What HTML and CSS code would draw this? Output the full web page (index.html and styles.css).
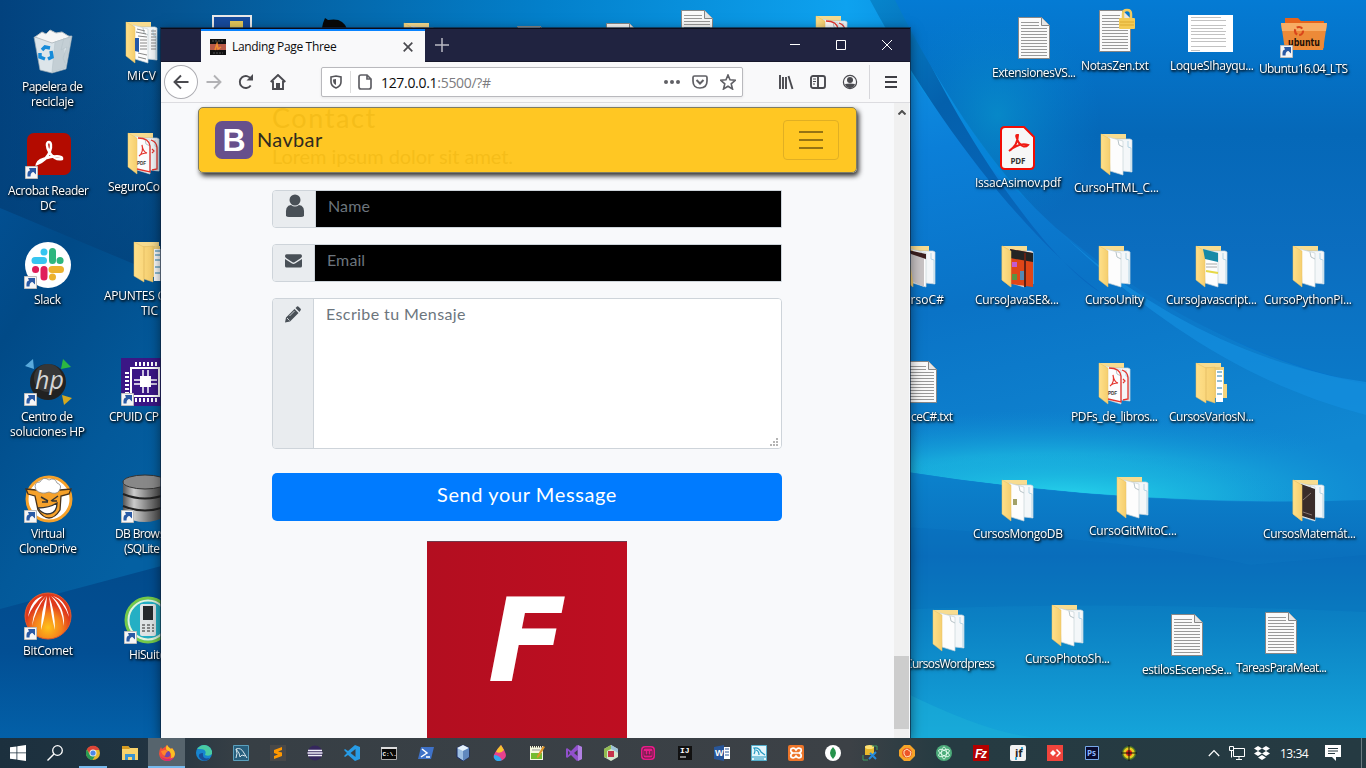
FILE: index.html
```html
<!DOCTYPE html>
<html lang="es">
<head>
<meta charset="utf-8">
<title>Escritorio</title>
<link rel="stylesheet" href="styles.css">
</head>
<body>
<main class="desktop">
<svg class="canvas" width="1366" height="738" viewBox="0 0 1366 738">
<defs>
<linearGradient id="base"><stop offset="0" stop-color="#02427e"/><stop offset=".13" stop-color="#055593"/><stop offset=".4" stop-color="#0380cb"/><stop offset=".62" stop-color="#0ea2ef"/><stop offset=".72" stop-color="#0784d8"/><stop offset=".85" stop-color="#0574cd"/><stop offset="1" stop-color="#0675cc"/></linearGradient>
<linearGradient id="left2" x1="0" y1="0" x2=".6" y2="1"><stop offset="0" stop-color="#024f91"/><stop offset=".25" stop-color="#014a87"/><stop offset=".7" stop-color="#03599a"/><stop offset="1" stop-color="#0460a2"/></linearGradient>
<linearGradient id="left3" x1="0" y1="0" x2="0" y2="1"><stop offset="0" stop-color="#024b8c"/><stop offset=".5" stop-color="#024f94"/><stop offset="1" stop-color="#0360a8"/></linearGradient>
<linearGradient id="shade" x1="0" y1="0" x2="0" y2="1"><stop offset="0" stop-color="#02427c" stop-opacity="0"/><stop offset="1" stop-color="#02427c" stop-opacity=".8"/></linearGradient>
<linearGradient id="ray" x1="0" y1="0" x2=".6" y2="1"><stop offset="0" stop-color="#0785cc"/><stop offset=".4" stop-color="#0460ac"/><stop offset="1" stop-color="#0868bf"/></linearGradient>
<linearGradient id="mid" x1="0" y1="0" x2=".2" y2="1"><stop offset="0" stop-color="#119bea"/><stop offset=".3" stop-color="#0b7fd8"/><stop offset=".6" stop-color="#0a73c6"/><stop offset="1" stop-color="#1088d2"/></linearGradient>
<linearGradient id="right" x1="0" y1="0" x2="0" y2="1"><stop offset="0" stop-color="#047bd4"/><stop offset=".35" stop-color="#0568b8"/><stop offset=".65" stop-color="#0b6dbf"/><stop offset="1" stop-color="#0b79c8"/></linearGradient>
<radialGradient id="teal"><stop offset="0" stop-color="#0894cd"/><stop offset="1" stop-color="#0580d0" stop-opacity="0"/></radialGradient>
<linearGradient id="low" x1="0" y1="0" x2="0" y2="1"><stop offset="0" stop-color="#0b82cd"/><stop offset=".32" stop-color="#0a70bd"/><stop offset=".55" stop-color="#0b80c3"/><stop offset="1" stop-color="#15a5da"/></linearGradient>
<radialGradient id="cyan"><stop offset="0" stop-color="#27d4ec"/><stop offset=".45" stop-color="#1bb8e0" stop-opacity=".85"/><stop offset="1" stop-color="#1090d5" stop-opacity="0"/></radialGradient>
<linearGradient id="fold"><stop offset="0" stop-color="#ffe08a"/><stop offset="1" stop-color="#f5ce6e"/></linearGradient>
<linearGradient id="metal"><stop offset="0" stop-color="#555"/><stop offset=".25" stop-color="#ccc"/><stop offset=".6" stop-color="#777"/><stop offset="1" stop-color="#333"/></linearGradient>
<radialGradient id="comet" cx=".5" cy=".75"><stop offset="0" stop-color="#ffc21a"/><stop offset=".6" stop-color="#f5801c"/><stop offset="1" stop-color="#df3a1c"/></radialGradient>
<clipPath id="cyanclip"><path d="M900 380H1366V500Q1140 508 900 471Z"/></clipPath>
<g id="back"><path d="M8 5h25v34H8z" fill="#eccb76"/><path d="M8 5h25v4H8z" fill="#f7dc90"/></g>
<g id="front"><path d="M8 5l9 5v36l-9-7z" fill="url(#fold)" stroke="#e8c065" stroke-width=".5"/></g>
<g id="folder"><use href="#back"/><path d="M19 10h18l2 1v32l-9-1-11-3z" fill="#f4f7f9" stroke="#cbd9df" stroke-width=".7"/><path d="M15 8l15 4v34l-13-4z" fill="#fdfdfd" stroke="#c5d3d7" stroke-width=".7"/><path d="M25 11l1 5 4 2" fill="none" stroke="#b8c4c8"/><path d="M35 12v6l3 1v23" fill="none" stroke="#b5d5e5"/><use href="#front"/></g>
<g id="pdffolder"><use href="#folder"/><path d="M18 10q11 0 12 8v26l-13-3M31 12q6 2 6 8v21l-5 1" fill="none" stroke="#e4342d" stroke-width="1.300"/><path d="M19 28q5-4 3-11 1 7 5 8-5 0-8 3M32 21l2 2-2 2" fill="none" stroke="#e4342d" stroke-width="1.200"/><text x="17" y="37" class="pdfmini" textLength="9" lengthAdjust="spacingAndGlyphs">PDF</text></g>
<g id="doc"><path d="M8.500 3.500h23l8 8v33h-31z" fill="#fafafa" stroke="#878787"/><path d="M31.500 3.500v8h8" fill="#e6e6e6" stroke="#878787"/><path d="M11 8.500h18M11 11.500h18M11 14.500h26M11 17.500h26M11 20.500h26M11 23.500h26M11 26.500h26M11 29.500h26M11 32.500h26M11 35.500h26M11 38.500h26M11 41.500h26" stroke="#999"/></g>
<g id="short"><path d="M.5 36.500h12v12H.5z" fill="#f6f6f6" stroke="#bdbdbd"/><path d="M2.500 46.500q-.5-6 2.500-6L4 38h7v6.500L8.500 42q-3 0-3 4.500z" fill="#2a5aa5"/></g>
</defs>
<rect width="1366" height="738" fill="url(#base)"/>
<rect y="28" width="180" height="260" fill="url(#shade)"/>
<path d="M0 208L165 277V570L0 610Z" fill="url(#left2)"/>
<path d="M0 609L165 565V738H0Z" fill="url(#left3)"/>
<path d="M870 0C905 75 965 160 1050 215C1130 290 1240 360 1366 384V520H880V20Z" fill="url(#mid)"/>
<path d="M870 0H900C970 160 1060 270 1100 292C1030 240 940 130 870 0Z" fill="url(#ray)"/>
<path d="M895 0H1366V384C1230 354 1130 290 1055 227C990 170 930 70 895 0Z" fill="url(#right)"/>
<path d="M895 0H1100V230H1055C990 170 930 70 895 0Z" fill="url(#teal)" opacity=".7"/>
<path d="M1055 227C1130 300 1245 365 1366 382V415C1250 385 1150 320 1055 227Z" fill="#148fde" opacity=".7"/>
<g clip-path="url(#cyanclip)"><ellipse cx="1040" cy="496" rx="380" ry="85" fill="url(#cyan)"/><ellipse cx="1060" cy="498" rx="240" ry="45" fill="url(#cyan)"/></g>
<path d="M900 471Q1140 509 1366 500V738H900Z" fill="url(#low)"/>
<path d="M900 527Q1140 540 1250 565L1366 555V612Q1100 600 900 610Z" fill="#0763b5" opacity=".2"/>
<path d="M900 690Q1000 740 1050 738H900Z" fill="#1bafd8" opacity=".5"/>
<g>
<!-- Recycle bin -->
<g transform="translate(28 28)"><path d="M6 9l38-1-6 33-14 4-12-3z" fill="#dce5ea" stroke="#9cacb6" stroke-width=".7"/><path d="M7 9l7-5 4 2 4-4 6 3 6-1 8 5-18 6z" fill="#f6f6f6" stroke="#b6bec3"/><path d="M27 14l-3 30 13-4 6-31zM36 10l-3 12 6-3-4 11 2 5" fill="#c4cfd5" stroke="#b6c3ca" stroke-width=".6"/><path d="M14 22l3-3 5 1M23 23l1 6-4 2M17 31l-5-2v-4" fill="none" stroke="#168bd9" stroke-width="3.500"/></g>
<g transform="translate(24 131)"><rect x="3" y="2" width="44" height="42" rx="7" fill="#b30b00"/><path d="M13 33C28 27 29 11 25 11C19 11 27 31 38 28C40 22 14 27 13 33Z" fill="none" stroke="#fff" stroke-width="2.500"/><use href="#short" x="1" y="-1"/></g>
<g transform="translate(24 241)"><circle cx="24" cy="24" r="23" fill="#fff"/><g stroke-width="7" stroke-linecap="round" fill="none"><path d="M11 19.500h8.500M20 11v.1" stroke="#36c5f0"/><path d="M28.500 10.500v9M36 19.500h.1" stroke="#2eb67d"/><path d="M28 28.500h8.500M28.500 36v.1" stroke="#ecb22e"/><path d="M20 28.500V36M11.500 28.500h.1" stroke="#e01e5a"/></g><use href="#short" y="-1"/></g>
<g transform="translate(24 358)"><circle cx="24" cy="24" r="18" fill="#222"/><circle cx="24" cy="20" r="14" fill="#777" opacity=".25"/><path d="M1 8l8-7 1 10z" fill="#5aaadc"/><path d="M39 1l8 8-10 2z" fill="#2cb742"/><path d="M38 37l10 3-8 7z" fill="#d5a920"/><text x="11" y="31" class="hp">hp</text><use href="#short" y="-1"/></g>
<g transform="translate(24 475)"><circle cx="25" cy="24" r="22" fill="#fff" stroke="#f5a12a" stroke-width="3"/><path d="M2 14l10 1h24l11-1-2 5-8 2-1 14q-5 8-11 8t-11-8l-3-14-7-2z" fill="#f5a12a" stroke="#47321b" stroke-width="1.300"/><path d="M12 15q-3-8 4-8 3-6 9-2 6-3 8 3 6 2 2 8-3 4-10 1-8 3-13-2z" fill="#fff" stroke="#888" stroke-width=".8"/><path d="M17 22l7 4M34 21l-7 5M18 27h6M28 26h5" stroke="#333" stroke-width="1.500"/><path d="M14 33q11 0 19-5 0 11-10 11-6-1-9-6z" fill="#fff" stroke="#333" stroke-width="1.300"/><use href="#short" y="-1"/></g>
<g transform="translate(24 592)"><circle cx="24" cy="24" r="23" fill="url(#comet)" stroke="#e95a2a"/><path d="M22 4Q9 16 8 34Q12 17 22 4M23 4Q17 18 17 38Q22 22 23 4M25 4Q27 23 31 38Q31 19 25 4M27 4Q38 16 40 34Q41 14 27 4M19 4Q7 7 4 25Q9 12 19 4M29 4Q42 8 45 25Q40 10 29 4" fill="#fff"/><use href="#short" y="-1"/></g>
<use href="#folder" x="118" y="17"/><path d="M135 38h4v14l-4-1z" fill="#2458a8"/><path d="M137 29l8 2M136 32l10 2M138 36l9 1M140 40h7M140 43h7M140 46h7M140 49h7M138 53l9 2M138 57l8 2M151 31h5M151 34h5M151 37h5M151 40h5M151 43h5M151 46h5M151 49h5" stroke="#888"/>
<use href="#pdffolder" x="120" y="128"/>
<g id="nest" transform="translate(126 237)"><use href="#back"/><path d="M29 9h5l1 17h3v14H26z" fill="#f4d47e"/><path d="M28 12h7v32h-7z" fill="#fff"/><path d="M29 14h5M29 18h5M29 23h5M29 30h5M29 36h5" stroke="#257fae"/><path d="M8 5l10 5v35l-10-6zM18 10l9-1v36l-9-3z" fill="url(#fold)" stroke="#e4bd64" stroke-width=".5"/></g>
<g transform="translate(121 358)"><path d="M0 0h48v48H0z" fill="#3b1785"/><path d="M10 10h28v28H10z" fill="none" stroke="#fff" stroke-width="2"/><rect x="19" y="18" width="11" height="11" fill="#fff"/><path d="M14 6h23M14 42h23" stroke="#fff" stroke-width="4" stroke-dasharray="2 2"/><path d="M6 14v23" stroke="#fff" stroke-width="4" stroke-dasharray="2 2"/><path d="M22 18v-6M27 18v-6M22 29v6M27 29v6M19 22h-6M19 26h-6M30 22h6M30 26h6" stroke="#fff" stroke-width="1.500"/><use href="#short" y="-1"/></g>
<g transform="translate(121 475)"><path d="M2 7v34q21 12 44 0V7z" fill="url(#metal)"/><ellipse cx="24" cy="7" rx="22" ry="7" fill="#888" stroke="#333"/><path d="M2 19q22 9 44 0M2 31q22 9 44 0" fill="none" stroke="#222" stroke-width="2"/><use href="#short" y="-1"/></g>
<g transform="translate(124 596)"><circle cx="24" cy="24" r="22" fill="#24afc4" stroke="#74c949" stroke-width="3"/><circle cx="24" cy="24" r="19.500" fill="none" stroke="#e2f5db" stroke-width="2"/><rect x="16" y="8" width="16" height="32" rx="2" fill="#dfe4e5"/><rect x="19" y="10" width="10" height="14" fill="#252a2c"/><path d="M18 29h3M23 29h3M28 29h2M18 32h3M23 32h3M28 32h2M18 35h3M23 35h3M28 35h2" stroke="#666" stroke-width="1.500"/><use href="#short" y="-1"/></g>
<!-- Icons peeking over the window -->
<path d="M213 16h38v14h-38z" fill="#174b9e" stroke="#e8e8e8" stroke-width="2"/><path d="M230 21h13v8h-13z" fill="#e4c75a"/><path d="M322 28q1-6 3-10l3 2q15-3 19 9z" fill="#080808"/>
<use href="#folder" x="396" y="18"/><use href="#doc" x="509" y="23"/><use href="#doc" x="598" y="20"/><use href="#doc" x="673" y="7"/><use href="#pdffolder" x="808" y="11"/>
<!-- Right side -->
<use href="#doc" x="1010" y="14"/><use href="#doc" x="1091" y="7"/><path d="M1123 19v-5q0-4 4-4t4 4v5" fill="none" stroke="#efcb60" stroke-width="2.500"/><rect x="1119" y="18" width="16" height="11" rx="1" fill="#f4cb55"/><path d="M1120 22h14M1120 25h14" stroke="#dda92f"/>
<path d="M1188 15h45v37h-45z" fill="#fff"/><path d="M1191 17.500h30M1191 20.500h35M1191 25.500h35M1191 28.500h32M1191 31.500h35M1191 34.500h34M1191 38.500h35M1191 41.500h35M1191 46.500h35M1191 50.500h9" stroke="#c2c2c2"/>
<g transform="translate(1280 9)"><path d="M5 9h13l3 3h23v27H5z" fill="#e6641c"/><path d="M1 14h46l-4 27H5z" fill="#ed8a38"/><path d="M1 14h46l-1 8H2z" fill="#f8ad64"/><circle cx="19" cy="22" r="4" fill="none" stroke="#d9451b" stroke-width="2.200" stroke-dasharray="6 2"/><text x="8" y="37" class="ubu" textLength="32" lengthAdjust="spacingAndGlyphs">ubuntu</text><use href="#short"/></g>
<path d="M1005 127h19l10 10v28q0 4-4 4h-25q-4 0-4-4v-34q0-4 4-4z" fill="#f7f7f7" stroke="#f20c04" stroke-width="2"/><path d="M1009 151Q1018 145 1018 135Q1014 134 1019 143Q1024 149 1028 145Q1020 142 1009 151" fill="none" stroke="#ef1a13" stroke-width="2"/><text x="1010.500" y="164" class="pdf" textLength="15">PDF</text>
<use href="#folder" x="1093" y="129"/>
<use href="#folder" x="896" y="241"/><path d="M908 250l16 7v30l-11-5z" fill="#c9c4c5"/><path d="M908 250l18 4v5l-15-5z" fill="#3c2020"/>
<use href="#folder" x="994" y="241"/><path d="M1010 249l23 4v34l-22-3z" fill="#df4618"/><path d="M1010 249l23 4v9l-23-4z" fill="#242424"/><path d="M1012 262h5v5h-5z" fill="#c35bd1"/><path d="M1012 274h5v6h-5z" fill="#5b9241"/><path d="M1020 271h4v9h-4z" fill="#5388b6"/><path d="M1025 253v34" stroke="#642115" stroke-width="2"/><use href="#front" x="994" y="241"/>
<use href="#folder" x="1091" y="241"/><use href="#folder" x="1188" y="241"/><path d="M1203 249l15 4v9l-13-3z" fill="#168aa7"/><path d="M1206 264h11M1206 267h11" stroke="#aaa"/><path d="M1206 271l12 2" stroke="#e6d847" stroke-width="2"/><use href="#folder" x="1285" y="241"/>
<use href="#doc" x="897" y="358"/><use href="#pdffolder" x="1091" y="358"/><g transform="translate(1188 358)"><use href="#back"/><path d="M32 9h4v17h3v14H27z" fill="#f4d47e"/><path d="M28 12h7v32h-7z" fill="#fff"/><path d="M29 14h5M29 18h5M29 23h5M29 30h5M29 36h5" stroke="#257fae"/><path d="M8 5l10 5v35l-10-6zM18 10l9-1v36l-9-3z" fill="url(#fold)" stroke="#e4bd64" stroke-width=".5"/></g>
<use href="#folder" x="994" y="475"/><path d="M1013 499h4v6h-4z" fill="#a2a168"/><use href="#folder" x="1109" y="472"/><use href="#folder" x="1285" y="475"/><path d="M1301 484l14 5v31l-13-4z" fill="#392c2a"/><path d="M1303 500l8-7M1303 512l9 3" stroke="#83736e"/><use href="#front" x="1285" y="475"/>
<use href="#folder" x="925" y="605"/><use href="#folder" x="1044" y="600"/><use href="#doc" x="1163" y="611"/><use href="#doc" x="1257" y="609"/>
</g>
<g class="labels">
<text x="22" y="91" textLength="61">Papelera de</text><text x="31" y="106" textLength="43">reciclaje</text>
<text x="8" y="195" textLength="81">Acrobat Reader</text><text x="40" y="210" textLength="16">DC</text>
<text x="34" y="304" textLength="27">Slack</text>
<text x="21" y="421" textLength="52">Centro de</text><text x="10" y="436" textLength="75">soluciones HP</text>
<text x="31" y="538" textLength="34">Virtual</text><text x="19" y="553" textLength="58">CloneDrive</text>
<text x="23" y="655" textLength="50">BitComet</text>
<text x="127" y="80" textLength="29">MiCV</text><text x="108" y="191" textLength="52">SeguroCo</text>
<text x="104" y="300" textLength="61">APUNTES C</text><text x="141" y="315" textLength="17">TIC</text>
<text x="109" y="421" textLength="50">CPUID CP</text><text x="115" y="538" textLength="56">DB Browse</text><text x="124" y="553" textLength="36">(SQLite</text><text x="129" y="659" textLength="37">HiSuite</text>
<text x="992" y="77" textLength="84">ExtensionesVS...</text><text x="1081" y="70" textLength="68">NotasZen.txt</text><text x="1170" y="70" textLength="84">LoqueSIhayqu...</text><text x="1259" y="73" textLength="89">Ubuntu16.04_LTS</text>
<text x="975" y="187" textLength="86">IssacAsimov.pdf</text><text x="1074" y="192" textLength="85">CursoHTML_C...</text>
<text x="903" y="304" textLength="41">ursoC#</text><text x="975" y="304" textLength="84">CursoJavaSE&amp;...</text><text x="1085" y="304" textLength="59">CursoUnity</text><text x="1166" y="304" textLength="91">CursoJavascript...</text><text x="1264" y="304" textLength="88">CursoPythonPi...</text>
<text x="911" y="421" textLength="42">ceC#.txt</text><text x="1071" y="421" textLength="87">PDFs_de_libros...</text><text x="1169" y="421" textLength="85">CursosVariosN...</text>
<text x="973" y="538" textLength="90">CursosMongoDB</text><text x="1089" y="535" textLength="88">CursoGitMitoC...</text><text x="1263" y="538" textLength="93">CursosMatemát...</text>
<text x="905" y="668" textLength="90">CursosWordpress</text><text x="1025" y="663" textLength="85">CursoPhotoSh...</text><text x="1142" y="674" textLength="90">estilosEsceneSe...</text><text x="1236" y="672" textLength="91">TareasParaMeat...</text>
</g>
</svg>

<section class="window">
<header class="titlebar">
<div class="tab"><svg width="16" height="16"><path d="M0 0h16v16H0z" fill="#111"/><path d="M0 5h16v6H0z" fill="#b85a48"/><path d="M2 2h12M3 14h10" stroke="#555" stroke-dasharray="2 1"/><path d="M5 11l2-6 1 5 3-2" stroke="#f08b31" fill="none" stroke-width="1.500"/></svg><span class="tabname">Landing Page Three</span><svg class="tabclose" width="10" height="10"><path d="M.7.7l8.600 8.600M9.300.7L.7 9.300" stroke="#4a4a4f" stroke-width="1.700"/></svg></div>
<svg class="plus" width="14" height="14"><path d="M7 0v14M0 7h14" stroke="#b9bac3" stroke-width="1.500"/></svg>
<div class="winbtns"><svg width="10" height="10"><path d="M0 4.500h10" stroke="#fff"/></svg><svg width="10" height="10"><path d="M.5.5h9v9h-9z" fill="none" stroke="#fff"/></svg><svg width="10" height="10"><path d="M0 0l10 10M10 0L0 10" stroke="#fff"/></svg></div>
</header>
<div class="toolbar">
<span class="back"><svg width="16" height="16"><path d="M15.500 8H1.500M8 1.500L1.500 8 8 14.500" class="ln"/></svg></span>
<svg class="fwd" width="16" height="16"><path d="M.5 8h14M8 1.500L14.500 8 8 14.500" class="ln"/></svg>
<svg class="reload" width="16" height="16"><path d="M12.700 11.500A6 6 0 1 1 13 5" class="ln"/><path d="M15 0v6.500H8.500z" fill="#4a4a4f"/></svg>
<svg class="home" width="16" height="16"><path d="M.7 8L8 1l7.300 7M3 7v8h10V7" class="ln"/><path d="M6 9h4v6H6z" fill="#4a4a4f"/></svg>
<div class="url">
<svg width="12" height="14"><path d="M1 2l5-1 5 1v5q0 4-5 6-5-2-5-6z" fill="none" stroke="#55555a" stroke-width="1.600"/><path d="M6 4v6q-3-1-3-5V4.500z" fill="#55555a"/></svg><i class="sep"></i>
<svg width="14" height="16"><path d="M3 1h6l4 4v8q0 2-2 2H3q-2 0-2-2V3q0-2 2-2zM9 1v4h4" fill="none" stroke="#606065" stroke-width="1.700"/></svg>
<span class="addr">127.0.0.1<em>:5500/?#</em></span>
<svg width="16" height="16"><g fill="#606065"><circle cx="2" cy="8" r="2"/><circle cx="8" cy="8" r="2"/><circle cx="14" cy="8" r="2"/></g></svg>
<svg class="pocket" width="16" height="16"><path d="M2.500 2h11q1.500 0 1.500 1.500V7q0 7-7 7T1 7V3.500Q1 2 2.500 2z" fill="none" stroke="#606065" stroke-width="1.700"/><path d="M4.500 6L8 9.500 11.500 6" fill="none" stroke="#606065" stroke-width="2"/></svg>
<svg width="16" height="16"><path d="M8 1l2 4.800 5.200.5-4 3.500L12.500 15 8 12.200 3.500 15l1.300-5.200-4-3.500L6 5.800z" fill="none" stroke="#606065" stroke-width="1.600"/></svg>
</div>
<svg class="lib" width="16" height="16"><path d="M2 1v14M5 3v12M8 3v12" class="ln"/><path d="M10.500 2l4 13" class="ln"/></svg>
<svg class="side" width="16" height="14"><rect x="1" y="1" width="14" height="12" rx="2" class="ln"/><path d="M8 1v12" class="ln"/><path d="M3 4h3M3 6.500h3M3 9h2" stroke="#4a4a4f"/></svg>
<svg class="user" width="16" height="16"><circle cx="8" cy="8" r="6.600" fill="none" stroke="#4a4a4f" stroke-width="1.200"/><circle cx="8" cy="6" r="3" fill="#4a4a4f"/><path d="M3 10q5-1 10 0-1 4-5 4t-5-4z" fill="#4a4a4f"/></svg>
<i class="divider"></i>
<svg class="menu" width="12" height="12"><path d="M0 1h12M0 6h12M0 11h12" stroke="#3f3f44" stroke-width="2"/></svg>
</div>
<div class="viewport">
<div class="page">
<div class="form">
<h2>Contact</h2><p>Lorem ipsum dolor sit amet.</p>
<div class="group"><span class="addon name"><svg width="20" height="24" viewBox="0 0 20 24"><path d="M1 22q-1-11 5-11 4 3 8 0 6 0 5 11-1 1-3 1H4q-2 0-3-1z"/><circle cx="10" cy="6" r="5.500"/></svg></span><span class="input">Name</span></div>
<div class="group"><span class="addon mail"><svg width="17" height="14" viewBox="0 0 17 14"><path d="M0 2q0-1.800 1.600-1.800h13.800Q17 .2 17 2q0 1-1 2L9.500 8.200q-1 .6-2 0L1 4Q0 3 0 2zM0 5l7 4.600q1.500.8 3 0L17 5v7q0 1.600-1.600 1.600H1.600Q0 13.600 0 12z"/></svg></span><span class="input">Email</span></div>
<div class="group message"><span class="addon pen"><svg width="16" height="17" viewBox="0 0 16 17"><path d="M0 16.500l1-5L9.500 3l4 4L5 15.500zM10.500 2L12 .6q.8-.6 1.600.2l2 2q.7.8 0 1.500L14.500 6z"/><path d="M2 12l2.500 2.500M4.500 10L9.500 5" stroke="#e9ecef" stroke-width=".8"/></svg></span><span class="input">Escribe tu Mensaje</span><svg class="grip" width="8" height="8"><path d="M6 0h2v2H6zM3 3h2v2H3zM6 3h2v2H6zM0 6h2v2H0zM3 6h2v2H3zM6 6h2v2H6z" fill="#b4b4b4"/></svg></div>
<div class="send"><span>Send your Message</span></div>
<div class="logo">F</div>
</div>
<nav class="navbar"><span class="bs">B</span><span class="brand">Navbar</span><span class="toggler"><svg width="24" height="18"><path d="M0 1h24M0 9h24M0 17h24" stroke="#957313" stroke-width="2"/></svg></span></nav>
</div>
<div class="scroll"><svg width="8" height="5"><path d="M.5 4.500L4 1l3.500 3.500" fill="none" stroke="#505050" stroke-width="2"/></svg><i class="thumb"></i></div>
</div>
</section>
</main>

<footer class="taskbar">
<span class="t start"><svg width="16" height="16"><path d="M0 2.300L6.500 1.400V7.500H0zM7.300 1.300L16 0v7.500H7.300zM0 8.300h6.500v6.200L0 13.700zM7.300 8.300H16V16l-8.700-1.300z" fill="#fff"/></svg></span>
<span class="t find"><svg width="16" height="16"><circle cx="10.500" cy="5.500" r="4.800" fill="none" stroke="#fff" stroke-width="1.300"/><path d="M7 9L.5 15.500" stroke="#fff" stroke-width="1.400"/></svg></span>
<span class="t run"><svg width="16" height="16"><circle cx="8" cy="8" r="7" fill="#e5b82e"/><path d="M1.900 4.500A7 7 0 0 1 14.500 5H8L5 9z" fill="#dc4437"/><path d="M1.900 4.500A7 7 0 0 0 7.500 15L10.500 10H5z" fill="#279b55"/><circle cx="8" cy="8" r="3.500" fill="#eee"/><circle cx="8" cy="8" r="2.600" fill="#4b87e8"/></svg></span>
<span class="t"><svg width="16" height="16"><path d="M0 1h6l2 2h8v12H0z" fill="#f8d36c"/><path d="M0 1h6l2 3H0z" fill="#d49b21"/><path d="M3 15V9h10v6h-3v-3H6v3z" fill="#3a93d1"/></svg></span>
<span class="t active"><svg width="16" height="16"><path d="M8 0q1 2 4 4l1-1q3 3 3 6-1 7-8 7T0 9q0-4 2-7l1 2 3-2z" fill="#f2503c"/><path d="M8 0q1 2 4 4l1-1q3 3 3 6-1 5-5 6 2-3 1-6-1-3-4-3-2-3 0-6z" fill="#fbc023"/><circle cx="8" cy="9" r="3.200" fill="#7146ad"/><path d="M2 6l4-1 3 1-2 2-1 3q-3-1-4-5" fill="#ff852b"/><path d="M1 11q3 5 8 5 4 0 6-4-3 2-7 2t-7-3" fill="#d82a77"/></svg></span>
<span class="t"><svg width="16" height="16"><circle cx="8" cy="8" r="8" fill="#1785cf"/><path d="M1 4Q6-2 12 1q5 3 4 8-3 3-7 1 3-7-8-6z" fill="#49cba2"/><path d="M7 8q-1 7 7 5-6 6-11-1-1-4 4-4z" fill="#194d98"/></svg></span>
<span class="t"><svg width="16" height="16"><path d="M.5.5h15v15H.5z" fill="#285f7d" stroke="#5ba0bd"/><path d="M3 13Q5 8 3 4q5-2 8 4l3 5M3 4q4 4 4 8l2-2 3 1" fill="none" stroke="#d9e7ed"/></svg></span>
<span class="t"><svg width="16" height="16"><path d="M0 0h16v16H0z" fill="#484848"/><path d="M4 5l8-3v3L8 6.500l4 1V11l-8 3v-3l4-1.500L4 8z" fill="#ff9800"/></svg></span>
<span class="t"><svg width="16" height="16"><circle cx="8" cy="8" r="7.500" fill="#35275d"/><path d="M1 5.500h14M.5 8h15M1 10.500h14" stroke="#f1effa" stroke-width="1.300"/></svg></span>
<span class="t"><svg width="16" height="16"><path d="M11 0l5 2v12l-5 2-7-6-3 2-1-1 3-3-3-3 1-1 3 2zM11.500 4L6.500 8l5 4z" fill="#279ce6" fill-rule="evenodd"/></svg></span>
<span class="t"><svg width="16" height="16"><path d="M.5 2.500h15v12H.5z" fill="#080808" stroke="#aaa"/><path d="M0 2h16v2H0z" fill="#ddd"/><text x="1.500" y="11" class="tiny">C:\.</text></svg></span>
<span class="t"><svg width="16" height="16"><path d="M3 2h13l-3 12H0z" fill="#3f72c8"/><path d="M4 4l5 4-6 4M8 12h4" fill="none" stroke="#fff" stroke-width="1.500"/></svg></span>
<span class="t"><svg width="16" height="16"><path d="M2 3l6-3 6 3v9l-6 4-6-4z" fill="#9dbfe2" stroke="#182b65"/><path d="M2 3l6 3 6-3-6-3z" fill="#e6f3fd"/><path d="M8 6l6-3v9l-6 4z" fill="#6088be"/></svg></span>
<span class="t"><svg width="16" height="16"><path d="M9 0Q0 10 2 13q6 6 11 0Q16 10 9 0z" fill="#e9418d"/><path d="M9 0Q5 4 4 7q5 2 8-2z" fill="#f7c52f"/><path d="M2 10q5 0 8 5-6 3-8-2z" fill="#30a9ef"/></svg></span>
<span class="t"><svg width="16" height="16"><path d="M1 1h13v14H1z" fill="#f4f7df"/><path d="M2 1.500h11" stroke="#333" stroke-dasharray="1 1" stroke-width="2"/><path d="M2 8h11v6H2z" fill="#75bb31"/><path d="M3 5h8" stroke="#999"/><path d="M8 11l6-10 2 1-6 10-2 1z" fill="#dc942b"/></svg></span>
<span class="t"><svg width="16" height="16"><path d="M11 0l5 2v12l-5 2-6-6-4 3-1-1V4l1-1 4 3zM2 5.500v5L4 8zM11.500 5L8 8l3.500 3z" fill="#9150cc" fill-rule="evenodd"/><path d="M12 0l4 2v12l-4 2z" fill="#b180e3"/></svg></span>
<span class="t"><svg width="16" height="16"><path d="M1 4l7-4 7 4v8l-7 4-7-4z" fill="#d5e8ce"/><path d="M1 4l7-4v4L4 6v7l-3-1z" fill="#93bb52"/><path d="M8 0l7 4v4l-3-2-4-2z" fill="#9dc2d8"/><path d="M5 6h6v6H5z" fill="#c5334a"/></svg></span>
<span class="t"><svg width="16" height="16"><rect x="1" y="1" width="14" height="14" rx="4" fill="#e91b89"/><rect x="3" y="3" width="10" height="10" rx="2" fill="none" stroke="#57213e"/><path d="M5 6v4h3V6v4h3V6" fill="none" stroke="#57213e" stroke-width="1.200"/></svg></span>
<span class="t"><svg width="16" height="16"><path d="M1 1h14v14H1z" fill="#111"/><text x="3" y="8" class="ij">IJ</text><path d="M3 12h6" stroke="#fff"/></svg></span>
<span class="t"><svg width="16" height="16"><path d="M7 2h9v12H7z" fill="#fff"/><path d="M0 2l10-2v16L0 14z" fill="#285699"/><text x="1" y="11" class="word">W</text><path d="M11 4h4M11 7h4M11 10h4" stroke="#285699"/></svg></span>
<span class="t"><svg width="16" height="16"><path d="M.5.5h15v15H.5z" fill="#e3f5fb" stroke="#53adca"/><path d="M3 9Q5 5 3 3q5-1 7 4l4 3M5 5q3 1 3 5M1 12h14M3 14h10" fill="none" stroke="#2599c1" stroke-width="1.200"/></svg></span>
<span class="t"><svg width="16" height="16"><rect width="16" height="16" rx="2" fill="#ed752a"/><path d="M5 8Q2 7 3 4q3-2 5 1 2-3 5-1 1 3-2 4 3 1 2 4-3 2-5-1-2 3-5 1-1-3 2-4h6" fill="none" stroke="#fff" stroke-width="1.700"/></svg></span>
<span class="t"><svg width="16" height="16"><circle cx="8" cy="8" r="8" fill="#fff"/><path d="M8 2q6 6 0 12-6-6 0-12z" fill="#25934c"/></svg></span>
<span class="t"><svg width="16" height="16"><path d="M3 1h9v9H3z" fill="#e6b72c"/><ellipse cx="7.500" cy="2" rx="4.500" ry="2" fill="#ffe275"/><path d="M1 10v5h5M10 1h5v4" fill="none" stroke="#419f62"/><path d="M7 14l7-7M8 8l6 6" stroke="#2589da" stroke-width="2"/></svg></span>
<span class="t"><svg width="16" height="16"><path d="M5 0h6l5 5v6l-5 5H5l-5-5V5z" fill="#f5a428"/><circle cx="8" cy="8" r="5" fill="#ed5528"/><path d="M5 6l3-2 4 3-1 4-4 1-2-3z" fill="none" stroke="#ffe5ba"/></svg></span>
<span class="t"><svg width="16" height="16"><circle cx="8" cy="8" r="8" fill="#4dac7b"/><g fill="none" stroke="#e8fff2" stroke-width=".8"><ellipse cx="8" cy="8" rx="2.500" ry="6"/><ellipse cx="8" cy="8" rx="2.500" ry="6" transform="rotate(60 8 8)"/><ellipse cx="8" cy="8" rx="2.500" ry="6" transform="rotate(-60 8 8)"/></g></svg></span>
<span class="t"><svg width="16" height="16"><path d="M0 0h16v16H0z" fill="#b30000"/><text x="2" y="13" class="fz" textLength="12">Fz</text></svg></span>
<span class="t"><svg width="16" height="16"><rect width="16" height="16" rx="2" fill="#f2f2f2"/><text x="5" y="12" class="iff">if</text><path d="M5 12h2v3H5zM11 2h2v2h-2z" fill="#43afd8"/></svg></span>
<span class="t"><svg width="16" height="16"><path d="M0 0h16v16H0z" fill="#f0443c"/><path d="M6 5l3 3-3 3-3-3zM9 5l1-1 4 4-4 4-1-1 3-3z" fill="#fff"/></svg></span>
<span class="t"><svg width="14" height="14"><path d="M.5.5h13v13H.5z" fill="#090c30" stroke="#76a8e9"/><text x="2" y="10" class="ps">Ps</text></svg></span>
<span class="t"><svg width="16" height="16"><circle cx="8" cy="8" r="7" fill="#557f22"/><circle cx="8" cy="8" r="5.700" fill="#e9cb20"/><circle cx="8" cy="8" r="3" fill="#e11e16"/><path d="M8 0v16M0 8h16" stroke="#111"/></svg></span>
<div class="tray"><svg width="12" height="8"><path d="M.8 7L6 1.500 11.200 7" fill="none" stroke="#fff" stroke-width="1.200"/></svg><svg width="16" height="14"><path d="M4.500 2.500h11v8h-11zM10 10.500v3M7 13.500h6M.5.5h4v4h-4zM2.500 4.500v7" fill="none" stroke="#fff"/></svg><svg width="16" height="14"><path d="M4 0l4 2.500L4 5 0 2.500zM12 0l4 2.500L12 5 8 2.500zM4 5l4 2.500L4 10 0 7.500zM12 5l4 2.500-4 2.500-4-2.500zM8 9l4 2.500L8 14l-4-2.500z" fill="#fff"/></svg><span class="clock">13:34</span><svg width="16" height="16"><path d="M0 0h16v12h-5v4l-4-4H0z" fill="#fff"/><path d="M3 3.500h10M3 6h10M3 8.500h7" stroke="#263941"/></svg></div>
</footer>
</body>
</html>
```
FILE: styles.css
```css
* { box-sizing: border-box; }
body { margin: 0; width: 1366px; height: 768px; overflow: hidden; font-family: "Open Sans", "Noto Sans", sans-serif; font-size: 12px; }
svg { display: block; flex: none; }
.desktop { position: relative; height: 738px; overflow: hidden; }
.labels { fill: #fff; font-size: 12px; filter: drop-shadow(1px 1px 1px rgba(0,0,0,.95)) drop-shadow(0 1px 1px rgba(0,0,0,.5)); }
.pdfmini { font: bold 6px "Liberation Sans", sans-serif; fill: #333; }
.pdf { font: bold 8px "Open Sans", sans-serif; fill: #333; }
.hp { font: italic 25px "Open Sans", sans-serif; fill: #d5d5d5; }
.ubu { font: bold 10px "DejaVu Sans", sans-serif; fill: #241006; }

.window { position: absolute; left: 161px; top: 28px; width: 749px; height: 710px; display: flex; flex-direction: column; background: #f7f9fc; box-shadow: 0 0 0 1px rgba(15,35,60,.65), 0 3px 12px rgba(0,0,0,.55); }
.titlebar { height: 34px; background: #202340; border-top: 1px solid #0b0c19; border-bottom: 1px solid #16172b; padding-left: 40px; display: flex; align-items: center; }
.tab { align-self: flex-start; width: 224px; height: 33px; background: #f9f9fa; border-top: 2px solid #0a84ff; display: flex; align-items: center; padding: 0 12px 0 9px; color: #0c0c0d; }
.tabname { margin-left: 6px; flex: 1; letter-spacing: -.33px; white-space: nowrap; }
.plus { margin-left: 10px; }
.winbtns { margin-left: auto; display: flex; gap: 36px; padding-right: 18px; }
.toolbar { height: 41px; flex: none; background: #f9f9fa; border-bottom: 1px solid #dcdce0; display: flex; align-items: center; padding: 0 13px 0 3px; }
.ln { fill: none; stroke: #4a4a4f; stroke-width: 1.9; }
.back { width: 34px; height: 34px; border: 1px solid #adadb2; border-radius: 50%; background: #fff; display: grid; place-items: center; }
.fwd { margin-left: 8px; opacity: .4; }
.reload { margin-left: 16px; }
.home { margin-left: 16px; }
.url { margin-left: 35px; width: 423px; height: 30px; border: 1px solid #b9b9bd; border-radius: 2px; background: #fff; display: flex; align-items: center; padding: 0 6px 0 8px; box-shadow: 0 1px 3px rgba(0,0,0,.08); }
.sep { width: 1px; height: 22px; background: #ddd; margin: 0 7px 0 8px; }
.addr { flex: 1; margin-left: 9px; font-size: 14px; letter-spacing: -.3px; color: #0c0c0d; }
.addr em { font-style: normal; color: #7c7c80; }
.pocket { margin: 0 12px; }
.lib { margin-left: 35px; }
.side { margin-left: 16px; }
.user { margin-left: 16px; }
.divider { width: 1px; height: 34px; background: #d7d7db; margin: 0 15px 0 11px; }
.viewport { flex: 1; min-height: 0; display: flex; }
.page { position: relative; width: 733px; overflow: hidden; padding: 0 111px; font-family: Lato, "Open Sans", sans-serif; background: #f8f9fb; }
.scroll { width: 15px; background: #f0f0f0; display: flex; flex-direction: column; align-items: center; padding-top: 7px; }
.thumb { width: 15px; height: 73px; background: #cdcdcd; margin-top: auto; margin-bottom: 9px; }
.form { width: 510px; display: flex; flex-direction: column; }
.form h2 { font-size: 27px; font-weight: 400; line-height: 30px; height: 30px; margin: 0 0 11px; letter-spacing: 1.6px; color: #6d6d6d; }
.form p { font-size: 20px; line-height: 24px; margin: 0 0 22px; letter-spacing: -.05px; color: #6d6d6d; }
.group { display: flex; height: 38px; margin-bottom: 16px; border: 1px solid #ced4da; border-radius: 4px 0 0 4px; position: relative; font-size: 16px; color: #6c757d; }
.addon { width: 43px; background: #e9ecef; border-right: 1px solid #ced4da; border-radius: 3px 0 0 3px; padding: 3px 12px; fill: #495057; flex: none; }
.mail { width: 42px; padding-top: 9px; }
.pen { width: 41px; padding-top: 7px; }
.input { flex: 1; background: #000; padding: 3px 12px; line-height: 24px; letter-spacing: .1px; }
.message { height: 151px; border-radius: 4px; margin-bottom: 24px; }
.message .input { background: #fff; border-radius: 0 3px 3px 0; letter-spacing: .4px; }
.grip { position: absolute; right: 3px; bottom: 2px; }
.send { height: 48px; border-radius: 5px; background: #007bff; color: #fff; font-size: 20px; line-height: 43px; letter-spacing: .6px; text-align: center; }
.logo { margin: 20px auto 0; width: 200px; height: 200px; background: linear-gradient(90deg,#b30e20,#be0e21); border-top: 1px solid #71394b; color: #fff; font: italic bold 115px/198px "DejaVu Sans", sans-serif; text-align: center; }
.navbar { position: absolute; left: 37px; top: 4px; width: 659px; height: 66px; border: 1px solid #7e7d64; border-radius: 5px; background: rgba(255,195,18,.93); box-shadow: 2px 3px 5px #333; display: flex; align-items: center; padding: 0 17px 0 16px; }
.bs { width: 38px; height: 38px; border-radius: 7px; background: #67508c; color: #fff; font: bold 32px/38px "Liberation Sans", sans-serif; text-align: center; }
.brand { margin-left: 4px; font-size: 20px; color: #302b20; line-height: 30px; padding-bottom: 3px; letter-spacing: .35px; }
.toggler { margin-left: auto; width: 56px; height: 40px; border: 1px solid #e0af23; border-radius: 4px; display: grid; place-items: center; }

.taskbar { height: 30px; display: flex; background: linear-gradient(90deg,#1c303e 0,#203341 140px,#373f45 240px,#3c4146 850px,#263b42 940px,#253a42); }
.t { width: 37px; display: grid; place-items: center; flex: none; }
.start { width: 36px; }
.find { width: 38px; }
.run { background: linear-gradient(#76b9ed,#76b9ed) 5px 28px / 28px 2px no-repeat; }
.active { background: #56646d; border-bottom: 2px solid #76b9ed; padding-top: 2px; }
.tray { margin-left: auto; border-right: 1px solid #6c7b81; margin-right: 4px; padding-right: 20px; display: flex; align-items: center; gap: 9px; color: #fff; }
.clock { letter-spacing: -.5px; margin: 0 9px 0 1px; width: 27px; }
.tiny { font: bold 6px "Liberation Mono", monospace; fill: #fff; }
.ij { font: bold 8px "Liberation Mono", monospace; fill: #fff; }
.word { font: bold 9px "Liberation Sans", sans-serif; fill: #fff; }
.fz { font: italic bold 12px "Liberation Sans", sans-serif; fill: #fff; }
.iff { font: bold 11px "Open Sans", sans-serif; fill: #222; }
.ps { font: bold 8px "Open Sans", sans-serif; fill: #8bb7ff; }
```
